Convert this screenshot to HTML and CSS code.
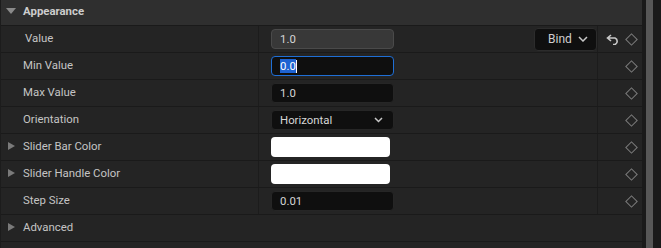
FILE: index.html
```html
<!DOCTYPE html>
<html lang="en">
<head>
    <meta charset="UTF-8">
    <title>Details - Slider</title>
    <link rel="stylesheet" href="styles.css">
</head>
<body>
    <div class="page">
        <div class="panel">
            <div class="category">
                <span class="arrow-down"></span>
                <span class="category-name">Appearance</span>
            </div>

            <div class="row">
                <div class="label label-value">Value</div>
                <div class="value value-bind">
                    <div class="input input-disabled">1.0</div>
                    <div class="bind">Bind <svg width="10" height="6" viewBox="0 0 10 6"><path d="M1 1 L5 5 L9 1" fill="none" stroke="#c8c8c8" stroke-width="1.5"/></svg></div>
                </div>
                <div class="extra extra-wide">
                    <svg class="reset" width="14" height="11" viewBox="0 0 14 11"><path d="M5 1 L1.5 4 L5 7 M1.5 4 H9 A3.5 3.5 0 0 1 9 10.5 H7" fill="none" stroke="#c8c8c8" stroke-width="1.6"/></svg>
                    <span class="diamond"></span>
                </div>
            </div>

            <div class="row">
                <div class="label">Min Value</div>
                <div class="value">
                    <div class="input input-focus"><span class="selected">0.0</span><span class="caret"></span></div>
                </div>
                <div class="extra"><span class="diamond"></span></div>
            </div>

            <div class="row">
                <div class="label">Max Value</div>
                <div class="value"><div class="input">1.0</div></div>
                <div class="extra"><span class="diamond"></span></div>
            </div>

            <div class="row">
                <div class="label">Orientation</div>
                <div class="value">
                    <div class="input combo">Horizontal <svg width="9" height="6" viewBox="0 0 9 6"><path d="M1 1 L4.5 4.5 L8 1" fill="none" stroke="#c8c8c8" stroke-width="1.5"/></svg></div>
                </div>
                <div class="extra"><span class="diamond"></span></div>
            </div>

            <div class="row">
                <div class="label"><span class="arrow-right"></span>Slider Bar Color</div>
                <div class="value"><div class="swatch"></div></div>
                <div class="extra"><span class="diamond"></span></div>
            </div>

            <div class="row">
                <div class="label"><span class="arrow-right"></span>Slider Handle Color</div>
                <div class="value"><div class="swatch"></div></div>
                <div class="extra"><span class="diamond"></span></div>
            </div>

            <div class="row">
                <div class="label">Step Size</div>
                <div class="value"><div class="input">0.01</div></div>
                <div class="extra"><span class="diamond"></span></div>
            </div>

            <div class="row row-group">
                <div class="label"><span class="arrow-right"></span>Advanced</div>
            </div>

            <div class="row row-group"></div>
        </div>
        <div class="scrollbar"><div class="thumb"></div></div>
    </div>
</body>
</html>
```

FILE: styles.css
```css
body {
    margin: 0;
    background-color: #1a1a1a;
    font-family: Roboto, "Liberation Sans", sans-serif;
    font-size: 11.4px;
    color: #c4c4c4;
}
.page {
    display: flex;
    width: 661px;
    height: 248px;
    overflow: hidden;
}
.panel {
    width: 641px;
    border-left: 1px solid #1c1c1c;
    background-color: #242424;
}
.scrollbar {
    width: 19px;
    padding-left: 4px;
    box-sizing: border-box;
    background-color: #1a1a1a;
}
.thumb {
    width: 7px;
    height: 100%;
    background-color: #575757;
}

/* category header */
.category {
    display: flex;
    align-items: center;
    height: 22px;
    padding-bottom: 3px;
    background-color: #2f2f2f;
    border-bottom: 1px solid #1a1a1a;
}
.arrow-down {
    width: 0;
    height: 0;
    margin-left: 5px;
    margin-right: 7px;
    border-left: 5.5px solid transparent;
    border-right: 5.5px solid transparent;
    border-top: 6px solid #8a8a8a;
}
.category-name {
    font-weight: bold;
    color: #cdcdcd;
}

/* property rows */
.row {
    display: flex;
    height: 26px;
    border-bottom: 1px solid #1a1a1a;
}
.label {
    display: flex;
    align-items: center;
    width: 235px;
    padding-left: 22px;
    padding-bottom: 2px;
    border-right: 1px solid #1c1c1c;
    position: relative;
}
.label-value {
    padding-left: 24px;
    width: 233px;
}
.row-group .label {
    border-right: none;
}
.arrow-right {
    position: absolute;
    left: 7px;
    top: 8px;
    width: 0;
    height: 0;
    border-top: 4.5px solid transparent;
    border-bottom: 4.5px solid transparent;
    border-left: 7px solid #7a7a7a;
}
.value {
    display: flex;
    align-items: center;
    width: 326px;
    padding-left: 12px;
    border-right: 1px solid #1c1c1c;
}
.value-bind {
    justify-content: space-between;
    padding-right: 0;
}
.extra {
    display: flex;
    align-items: center;
    justify-content: flex-end;
    flex: 1;
    padding-right: 4px;
}
.extra-wide {
    justify-content: space-between;
    padding-left: 8px;
}
.input {
    display: flex;
    align-items: center;
    box-sizing: border-box;
    width: 123px;
    height: 20px;
    padding-left: 8px;
    background-color: #0f0f0f;
    border: 1px solid #262626;
    border-radius: 4px;
    color: #d6d6d6;
}
.input-disabled {
    background-color: #383838;
    border-color: #4a4a4a;
}
.input-focus {
    border-color: #1f6fd6;
}
.selected {
    background-color: #1e63d2;
    color: #ffffff;
}
.caret {
    width: 1px;
    height: 13px;
    background-color: #ffffff;
}
.combo {
    justify-content: space-between;
    padding-right: 10px;
}
.swatch {
    width: 119px;
    height: 20px;
    background-color: #ffffff;
    border-radius: 4px;
}
.bind {
    display: flex;
    align-items: center;
    gap: 6px;
    box-sizing: border-box;
    height: 23px;
    width: 63px;
    padding-left: 13px;
    background-color: #0f0f0f;
    border: 1px solid #2c2c2c;
    border-radius: 4px;
    color: #cfcfcf;
    font-size: 12px;
}
.reset {
    margin-top: 1px;
}
.diamond {
    width: 7px;
    height: 7px;
    margin-right: 2px;
    border: 1.5px solid #7c7c7c;
    transform: rotate(45deg);
}
```
